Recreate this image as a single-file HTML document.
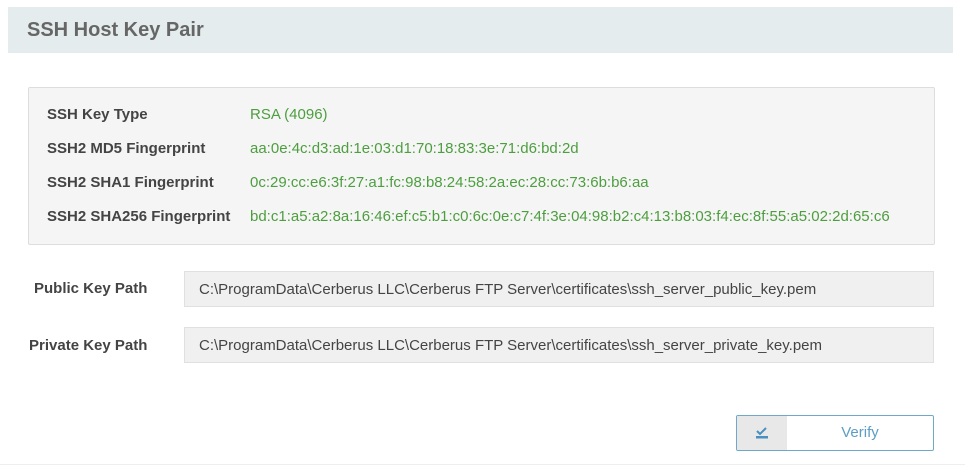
<!DOCTYPE html>
<html><head><style>
body{margin:0;width:965px;height:466px;background:#fff;font-family:"Liberation Sans",sans-serif;position:relative;overflow:hidden}
.hdr{position:absolute;left:8px;top:7px;width:945px;height:46px;background:#e4eced}
.hdr span{position:absolute;left:19px;top:12px;font-size:20px;font-weight:bold;color:#666}
.box{position:absolute;left:28px;top:87px;width:905px;height:156px;background:#f5f5f5;border:1px solid #ddd;border-radius:2px}
.r{position:absolute;font-size:15px}
.l{left:47px;font-weight:bold;color:#444}
.v{left:250px;color:#4d9e3f}
.lab{position:absolute;font-size:15px;font-weight:bold;color:#444}
.inp{position:absolute;left:184px;width:750px;height:36px;background:#f0f0f0;border:1px solid #e0e0e0;font-size:15px;color:#444;line-height:35px;box-sizing:border-box;padding-left:14px}
.btn{position:absolute;left:736px;top:415px;width:198px;height:36px;border:1px solid #6fa9c9;border-radius:2px;box-sizing:border-box;overflow:hidden}
.ic{position:absolute;left:0;top:0;width:50px;height:100%;background:#e8e8e8}
.bt{position:absolute;left:50px;right:0;top:0;line-height:34px;text-align:center;color:#5d9dc4;font-size:15px}
.bl{position:absolute;left:0;top:464px;width:965px;height:1px;background:#eee}
</style></head><body>
<div class="hdr"><span>SSH Host Key Pair</span></div>
<div class="box"></div>
<div class="r l" style="top:106px">SSH Key Type</div><div class="r v" style="top:106px">RSA (4096)</div>
<div class="r l" style="top:140px">SSH2 MD5 Fingerprint</div><div class="r v" style="top:140px">aa:0e:4c:d3:ad:1e:03:d1:70:18:83:3e:71:d6:bd:2d</div>
<div class="r l" style="top:174px">SSH2 SHA1 Fingerprint</div><div class="r v" style="top:174px">0c:29:cc:e6:3f:27:a1:fc:98:b8:24:58:2a:ec:28:cc:73:6b:b6:aa</div>
<div class="r l" style="top:208px">SSH2 SHA256 Fingerprint</div><div class="r v" style="top:208px">bd:c1:a5:a2:8a:16:46:ef:c5:b1:c0:6c:0e:c7:4f:3e:04:98:b2:c4:13:b8:03:f4:ec:8f:55:a5:02:2d:65:c6</div>
<div class="lab" style="left:34px;top:280px">Public Key Path</div>
<div class="inp" style="top:271px">C:\ProgramData\Cerberus LLC\Cerberus FTP Server\certificates\ssh_server_public_key.pem</div>
<div class="lab" style="left:29px;top:337px">Private Key Path</div>
<div class="inp" style="top:327px">C:\ProgramData\Cerberus LLC\Cerberus FTP Server\certificates\ssh_server_private_key.pem</div>
<div class="btn"><div class="ic"><svg width="50" height="34" viewBox="0 0 50 34"><path d="M20 15l3 3 6-6" stroke="#4a8fc0" stroke-width="2" fill="none"/><rect x="19" y="20" width="12" height="2.5" fill="#4a8fc0"/></svg></div><div class="bt">Verify</div></div>
<div class="bl"></div>
</body></html>
